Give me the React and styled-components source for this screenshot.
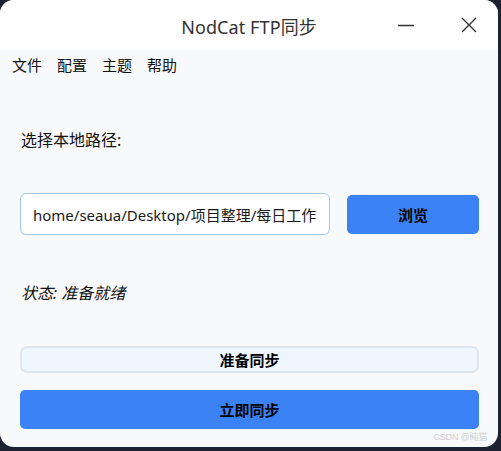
import React from 'react'
import styled, { createGlobalStyle } from 'styled-components'

const GlobalStyle = createGlobalStyle`
    html, body {
        margin: 0;
        padding: 0;
        background: #1b2232;
    }
    body {
        font-family: "Noto Sans", "Noto Sans CJK SC", sans-serif;
        width: 501px;
        height: 451px;
        overflow: hidden;
    }
`

const MENU = ['文件', '配置', '主题', '帮助']

export default function App() {
    return (
        <>
            <GlobalStyle />
            <Window>
                <TitleBar>
                    <span />
                    <Title>NodCat FTP同步</Title>
                    <Controls>
                        <ControlButton aria-label="minimize">
                            <svg width="18" height="18" viewBox="0 0 18 18">
                                <path d="M1 9.5h16" stroke="#333" strokeWidth="1.3" />
                            </svg>
                        </ControlButton>
                        <ControlButton aria-label="close">
                            <svg width="18" height="18" viewBox="0 0 18 18">
                                <path d="M2 2l14 14M16 2L2 16" stroke="#333" strokeWidth="1.4" />
                            </svg>
                        </ControlButton>
                    </Controls>
                </TitleBar>

                <MenuBar>
                    {MENU.map(item => (
                        <MenuItem key={item}>{item}</MenuItem>
                    ))}
                </MenuBar>

                <Content>
                    <Label>选择本地路径:</Label>
                    <PathRow>
                        <PathInput>
                            home/seaua/Desktop/项目整理/每日工作
                            <Caret />
                        </PathInput>
                        <BrowseButton>浏览</BrowseButton>
                    </PathRow>
                    <Status>状态: 准备就绪</Status>
                    <ProgressBar>准备同步</ProgressBar>
                    <SyncButton>立即同步</SyncButton>
                </Content>

                <Watermark>CSDN @盹猫</Watermark>
            </Window>
        </>
    )
}

const Window = styled.div`
    position: relative;
    width: 498px;
    height: 447px;
    border-radius: 14px;
    overflow: hidden;
    background: #f8f9fb;
    display: flex;
    flex-direction: column;
`

const TitleBar = styled.div`
    height: 50px;
    flex-shrink: 0;
    background: #ffffff;
    display: grid;
    grid-template-columns: 1fr auto 1fr;
    align-items: center;
`

const Title = styled.div`
    font-size: 18px;
    color: #333333;
    letter-spacing: 0.1px;
    padding-top: 1px;
`

const Controls = styled.div`
    display: flex;
    justify-content: flex-end;
    align-items: center;
    gap: 45px;
    padding-right: 20px;
`

const ControlButton = styled.div`
    width: 18px;
    height: 18px;
    display: flex;
    align-items: center;
    justify-content: center;
`

const MenuBar = styled.div`
    height: 30px;
    display: flex;
    align-items: center;
    gap: 15px;
    padding-left: 12px;
`

const MenuItem = styled.span`
    font-size: 15px;
    color: #111111;
    line-height: 20px;
`

const Content = styled.div`
    display: flex;
    flex-direction: column;
    padding: 50px 19px 0 20px;
`

const Label = styled.div`
    font-size: 16px;
    line-height: 20px;
    color: #111111;
    padding-left: 1px;
`

const PathRow = styled.div`
    margin-top: 43px;
    display: flex;
    align-items: center;
    gap: 17px;
`

const PathInput = styled.div`
    flex: 1;
    height: 42px;
    box-sizing: border-box;
    border: 1px solid #a3c8f6;
    border-radius: 6px;
    background: #ffffff;
    padding: 0 12px;
    display: flex;
    align-items: center;
    font-size: 15px;
    color: #1a1a1a;
    white-space: nowrap;
    overflow: hidden;
`

const Caret = styled.span`
    display: inline-block;
    width: 1px;
    height: 22px;
    margin-left: 1px;
    background: #000000;
`

const BlueButton = styled.div`
    height: 39px;
    box-sizing: border-box;
    background: #3b82f6;
    border-radius: 5px;
    display: flex;
    align-items: center;
    justify-content: center;
    font-size: 15px;
    font-weight: 700;
    color: #000000;
`

const BrowseButton = styled(BlueButton)`
    width: 132px;
    flex-shrink: 0;
`

const SyncButton = styled(BlueButton)`
    width: 100%;
`

const Status = styled.div`
    margin-top: 48px;
    font-size: 16px;
    line-height: 20px;
    font-style: italic;
    color: #111111;
    padding-left: 1px;
`

const ProgressBar = styled.div`
    margin-top: 43px;
    margin-bottom: 17px;
    height: 27px;
    box-sizing: border-box;
    border: 2px solid #dde5ef;
    border-radius: 7px;
    background: #eff6ff;
    display: flex;
    align-items: center;
    justify-content: center;
    font-size: 15px;
    font-weight: 700;
    color: #000000;
`

const Watermark = styled.div`
    position: absolute;
    right: 11px;
    bottom: 5px;
    font-size: 9px;
    line-height: 10px;
    letter-spacing: -0.2px;
    color: #cdd0d4;
    font-family: "Liberation Sans", "Noto Sans CJK SC", sans-serif;
`
